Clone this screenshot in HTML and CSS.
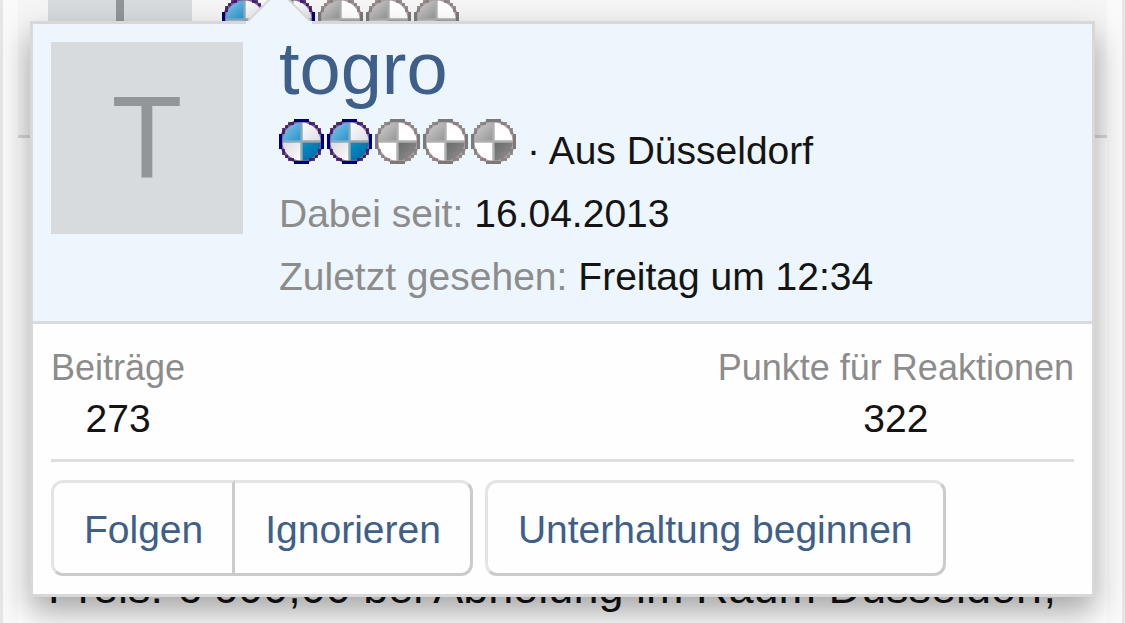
FILE: index.html
```html
<!DOCTYPE html>
<html lang="de">

<head>
  <meta charset="UTF-8">
  <meta name="viewport" content="width=device-width, initial-scale=1.0">
  <title>togro</title>
  <link rel="stylesheet" href="styles.css">
</head>

<body>
  <svg class="sprites" aria-hidden="true">
    <defs>
      <linearGradient id="blueLight" x1="0" y1="0" x2="1" y2="1">
        <stop offset="0" stop-color="#8ccbea"/><stop offset="1" stop-color="#2491cc"/>
      </linearGradient>
      <linearGradient id="blueDark" x1="0" y1="0" x2="1" y2="1">
        <stop offset="0" stop-color="#0095cc"/><stop offset="1" stop-color="#005f9c"/>
      </linearGradient>
      <linearGradient id="grayLight" x1="0" y1="0" x2="1" y2="1">
        <stop offset="0" stop-color="#d4d4d4"/><stop offset="1" stop-color="#929292"/>
      </linearGradient>
      <linearGradient id="grayDark" x1="0" y1="0" x2="1" y2="1">
        <stop offset="0" stop-color="#686868"/><stop offset="1" stop-color="#949494"/>
      </linearGradient>
      <linearGradient id="silver" x1="0" y1="0" x2="1" y2="1">
        <stop offset="0" stop-color="#d8d8dc"/><stop offset="1" stop-color="#ffffff"/>
      </linearGradient>
      <linearGradient id="silverTop" x1="0" y1="0" x2="1" y2="1">
        <stop offset="0" stop-color="#ffffff"/><stop offset="1" stop-color="#dcdce0"/>
      </linearGradient>
      <path id="steps" d="M3 1h2v1H3zM10 1h2v1h-2zM2 2h1v1H2zM12 2h1v1h-1zM1 3h1v2H1zM13 3h1v2h-1zM1 10h1v2H1zM13 10h1v2h-1zM2 12h1v1H2zM12 12h1v1h-1zM3 13h2v1H3zM10 13h2v1h-2z"/>
      <path id="sides" d="M5 0h5v1H5zM0 5h1v5H0zM14 5h1v5h-1zM5 14h5v1H5z"/>
      <symbol id="badge-on" viewBox="0 0 15 15">
        <circle cx="7.5" cy="7.5" r="6.6" fill="#fff"/>
        <path d="M7.5 7.5V.9A6.6 6.6 0 0 0 .9 7.5z" fill="url(#blueLight)"/>
        <path d="M7.5 7.5V.9A6.6 6.6 0 0 1 14.1 7.5z" fill="url(#silverTop)"/>
        <path d="M7.5 7.5V14.1A6.6 6.6 0 0 1 .9 7.5z" fill="url(#silver)"/>
        <path d="M7.5 7.5V14.1A6.6 6.6 0 0 0 14.1 7.5z" fill="url(#blueDark)"/>
        <path d="M7.5 1v13M1 7.5h13" stroke="#8fa9b5" stroke-width=".8"/>
        <circle cx="7.5" cy="7.5" r="6.8" fill="none" stroke="#7a5c8c" stroke-width=".9"/>
        <use href="#steps" fill="#35106a" opacity=".8"/>
        <use href="#sides" fill="#00007a"/>
      </symbol>
      <symbol id="badge-off" viewBox="0 0 15 15">
        <circle cx="7.5" cy="7.5" r="6.6" fill="#fff"/>
        <path d="M7.5 7.5V.9A6.6 6.6 0 0 0 .9 7.5z" fill="url(#grayLight)"/>
        <path d="M7.5 7.5V14.1A6.6 6.6 0 0 0 14.1 7.5z" fill="url(#grayDark)"/>
        <path d="M7.5 1v13M1 7.5h13" stroke="#b0b0b0" stroke-width=".8"/>
        <circle cx="7.5" cy="7.5" r="6.8" fill="none" stroke="#aaa0a0" stroke-width=".9"/>
        <use href="#steps" fill="#857a7a" opacity=".8"/>
        <use href="#sides" fill="#7a7a7a"/>
      </symbol>
    </defs>
  </svg>

  <main class="page">
    <article class="post">
      <header class="post-user">
        <div class="avatar avatar-small">T</div>
        <div class="badges">
          <svg><use href="#badge-on"/></svg>
          <svg><use href="#badge-on"/></svg>
          <svg><use href="#badge-off"/></svg>
          <svg><use href="#badge-off"/></svg>
          <svg><use href="#badge-off"/></svg>
        </div>
      </header>
      <p class="post-text">Preis: € 600,00 bei Abholung im Raum Düsseldorf,</p>
    </article>
  </main>

  <section class="tooltip">
    <svg class="arrow" viewBox="0 0 66 36" aria-hidden="true">
      <path d="M0 36V33H3L33 3L63 33H66V36z" fill="#edf5fd"/>
      <path d="M2 33L33 2L64 33" fill="none" stroke="#d8d8d8" stroke-width="2"/>
    </svg>
    <header class="member">
      <div class="avatar">T</div>
      <div class="member-info">
        <h4 class="member-name"><a href="#">togro</a></h4>
        <div class="member-line">
          <div class="badges">
            <svg><use href="#badge-on"/></svg>
            <svg><use href="#badge-on"/></svg>
            <svg><use href="#badge-off"/></svg>
            <svg><use href="#badge-off"/></svg>
            <svg><use href="#badge-off"/></svg>
          </div>
          <span>· Aus Düsseldorf</span>
        </div>
        <div class="member-line"><span class="label">Dabei seit:</span> <span>16.04.2013</span></div>
        <div class="member-line"><span class="label">Zuletzt gesehen:</span> <span>Freitag um 12:34</span></div>
      </div>
    </header>

    <div class="tooltip-body">
      <div class="stats">
        <dl>
          <dt>Beiträge</dt>
          <dd>273</dd>
        </dl>
        <dl>
          <dt>Punkte für Reaktionen</dt>
          <dd>322</dd>
        </dl>
      </div>
      <div class="actions">
        <div class="button-group">
          <button type="button">Folgen</button>
          <button type="button">Ignorieren</button>
        </div>
        <button type="button">Unterhaltung beginnen</button>
      </div>
    </div>
  </section>
</body>

</html>
```

FILE: styles.css
```css
* {
  margin: 0;
  padding: 0;
  box-sizing: border-box;
}

body {
  font-family: "Liberation Sans", Arial, sans-serif;
  font-size: 39px;
  color: #141414;
  background: #e6e6e6;
  min-height: 100vh;
  padding: 0 3px;
  position: relative;
  overflow: hidden;
}

.sprites {
  position: absolute;
  width: 0;
  height: 0;
}

/* Thread behind the member card */
.page {
  background: #fafafa;
  height: 100vh;
  padding: 0 15px;
  overflow: hidden;
}

.post {
  background: #fefefe;
  min-height: 100vh;
}

.post-user {
  display: flex;
  gap: 30px;
  height: 138px;
  padding: 0 30px;
  background: #f5f5f5;
  border-bottom: 3px solid #d8d8d8;
}

.post-user .avatar,
.post-user .badges {
  margin-top: -60px;
}

.post-user .badges {
  padding-top: 57px;
}

.post-text {
  padding: 426px 30px 0;
  font-size: 45px;
  line-height: 48px;
  white-space: nowrap;
}

.avatar {
  flex: none;
  display: flex;
  align-items: center;
  justify-content: center;
  width: 192px;
  height: 192px;
  background: #d7dbde;
  color: #929698;
  font-size: 116px;
  line-height: 116px;
}

.avatar-small {
  width: 144px;
  height: 144px;
  font-size: 86px;
}

.badges {
  display: flex;
  gap: 3px;
}

.badges svg {
  display: block;
  width: 45px;
  height: 45px;
}

/* Member card */
.tooltip {
  position: absolute;
  top: 21px;
  left: 30px;
  right: 30px;
  background: #fefefe;
  border: 3px solid #d8d8d8;
  box-shadow: 0 15px 30px rgba(0, 0, 0, 0.35);
}

.arrow {
  position: absolute;
  top: -36px;
  left: 213px;
  width: 66px;
  height: 36px;
}

.member {
  display: flex;
  gap: 36px;
  padding: 18px 18px 13px;
  background: #edf5fd;
  border-bottom: 3px solid #d8dce0;
}

.member-name {
  margin-bottom: 23px;
  font-size: 74px;
  font-weight: 400;
  line-height: 54px;
}

.member-name a {
  color: #3d5f8a;
  text-decoration: none;
}

.member-line {
  display: flex;
  gap: 11px;
  line-height: 63px;
}

.label,
.stats dt {
  color: #8c8c8c;
}

.tooltip-body {
  padding: 18px;
}

.stats {
  display: flex;
  justify-content: space-between;
  padding-bottom: 15px;
  border-bottom: 3px solid #dedede;
  text-align: center;
}

.stats dt {
  font-size: 36px;
  line-height: 51px;
}

.stats dd {
  line-height: 51px;
}

.actions {
  display: flex;
  gap: 12px;
  padding-top: 18px;
}

.button-group {
  display: flex;
}

button {
  padding: 20px 30px 16px;
  font: inherit;
  line-height: 54px;
  color: #3d5f8a;
  background: transparent;
  border: 3px solid;
  border-color: #e4e4e4 #cbcbcb #cbcbcb #e4e4e4;
  border-radius: 12px;
  cursor: pointer;
}

.button-group button {
  padding-right: 29px;
}

.button-group button:first-child {
  border-radius: 12px 0 0 12px;
}

.button-group button:last-child {
  border-left: 0;
  border-radius: 0 12px 12px 0;
}
```
